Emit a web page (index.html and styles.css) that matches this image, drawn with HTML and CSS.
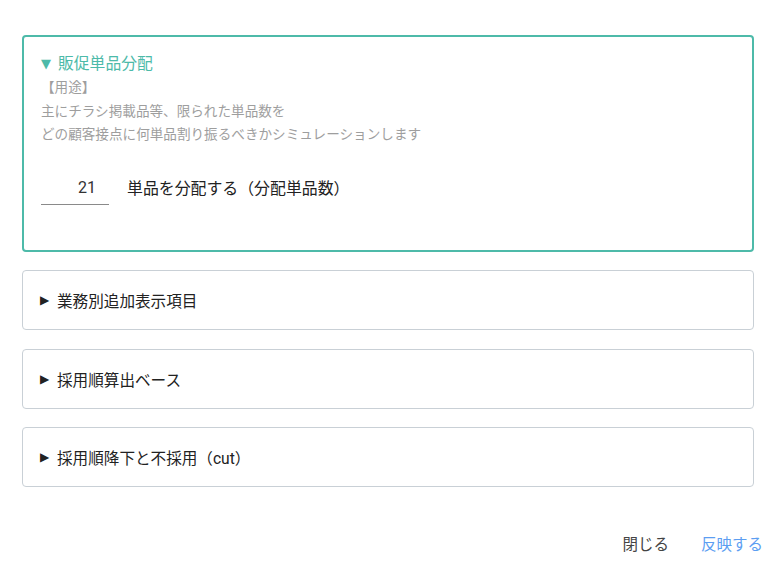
FILE: index.html
```html
<html lang="ja">
<head>
    <meta charset="UTF-8">
    <meta name="viewport" content="width=device-width, initial-scale=1.0">
    <title>設定</title>
    <link rel="stylesheet" href="styles.css">
</head>
<body>
    <div class="panel">
        <details class="section" open>
            <summary class="section-title">販促単品分配</summary>
            <div class="section-body">
                <p class="desc">【用途】<br>主にチラシ掲載品等、限られた単品数を<br>どの顧客接点に何単品割り振るべきかシミュレーションします</p>
                <div class="count-row">
                    <input type="text" class="count-input" value="21">
                    <span class="count-lbl">単品を分配する（分配単品数）</span>
                </div>
            </div>
        </details>
        <details class="section">
            <summary class="section-title">業務別追加表示項目</summary>
        </details>
        <details class="section">
            <summary class="section-title">採用順算出ベース</summary>
        </details>
        <details class="section">
            <summary class="section-title">採用順降下と不採用（cut）</summary>
        </details>
    </div>
    <div class="actions">
        <button class="btn btn-close">閉じる</button>
        <button class="btn btn-apply">反映する</button>
    </div>
</body>
</html>
```

FILE: styles.css
```css
* {
    box-sizing: border-box;
    margin: 0;
}
body {
    background: #fff;
    font-family: Roboto, "Noto Sans CJK JP", sans-serif;
    color: #333;
}
.panel {
    padding: 35px 21px 0 22px;
    display: flex;
    flex-direction: column;
    gap: 18.5px;
}
.section {
    border: 1px solid #c9d0d6;
    border-radius: 4px;
}
.section[open] {
    border: 2px solid #4dbaa9;
}
.section-title {
    list-style: none;
    display: flex;
    align-items: center;
    height: 58px;
    padding-left: 17px;
    font-size: 15.6px;
    color: #222;
    cursor: pointer;
}
.section-title::-webkit-details-marker {
    display: none;
}
.section-title::before { /*custom disclosure triangle*/
    content: "\25B6";
    font-family: "DejaVu Sans", sans-serif;
    font-size: 12px;
    width: 17px;
}
.section[open] .section-title {
    height: auto;
    padding: 15px 0 0 17px;
    line-height: 24px;
    font-size: 15.8px;
    color: #4dbaa9;
}
.section[open] .section-title::before {
    content: "\25BC";
    width: 17px;
    font-size: 13px;
}
.section-body {
    padding: 0 17px 45px 17px;
}
.desc {
    font-size: 13.6px;
    line-height: 23.5px;
    color: #9e9e9e;
}
.count-row {
    display: flex;
    align-items: center;
    gap: 18px;
    margin-top: 24px;
}
.count-input {
    width: 68px;
    height: 34px;
    border: none;
    border-bottom: 1px solid #8a8a8a;
    outline: none;
    text-align: right;
    padding: 0 13px 0 0;
    font-family: Roboto, sans-serif;
    font-size: 16px;
    color: #333;
}
.count-lbl {
    font-size: 15.9px;
    color: #222;
}
.actions {
    display: flex;
    justify-content: flex-end;
    gap: 16px;
    padding: 39px 4px 0 0;
}
.btn {
    background: none;
    border: none;
    padding: 6px 8px;
    font-family: "Noto Sans CJK JP", sans-serif;
    font-size: 15.5px;
    cursor: pointer;
}
.btn-close {
    color: #444;
}
.btn-apply {
    color: #5c9ef2;
}
```
